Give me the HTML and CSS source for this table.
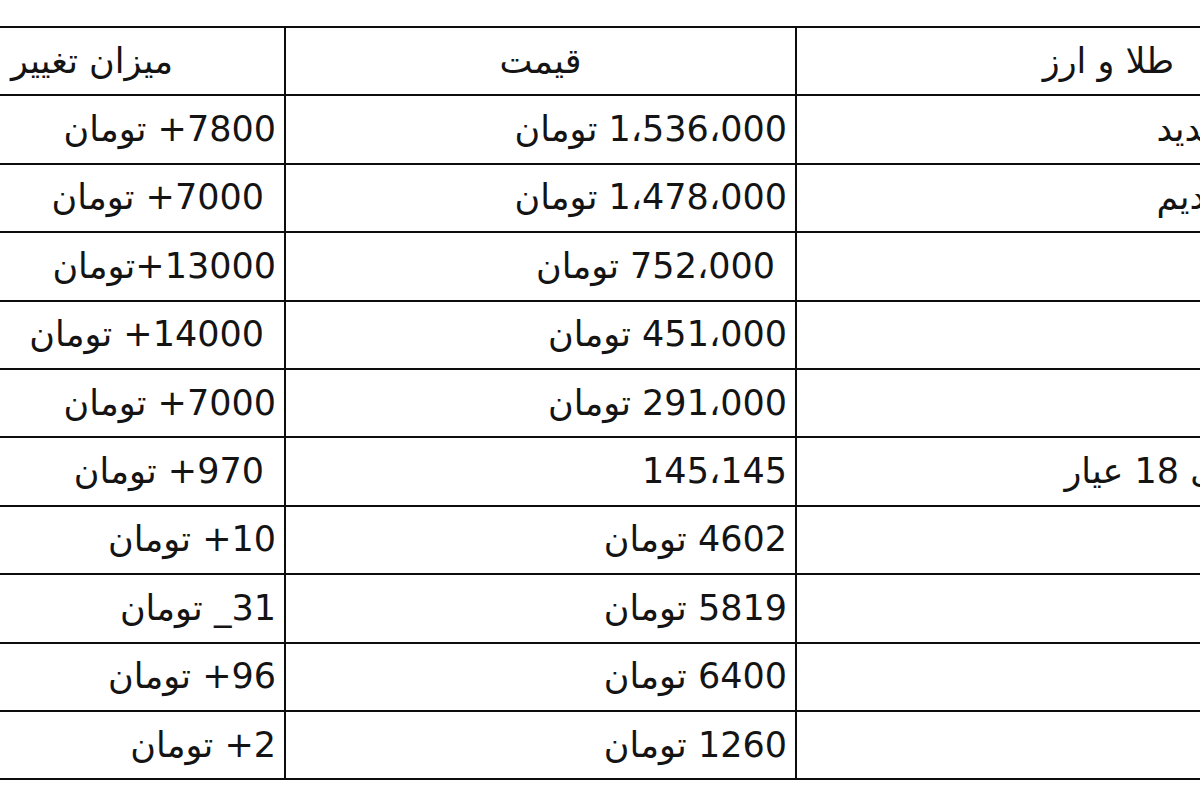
FILE: index.html
```html
<!DOCTYPE html>
<html lang="fa">
<head>
<meta charset="utf-8">
<title>قیمت طلا و ارز</title>
<link rel="stylesheet" href="styles.css">
</head>
<body>
<div class="page">
  <table class="rates" dir="rtl">
    <colgroup>
      <col class="c-name">
      <col class="c-price">
      <col class="c-change">
    </colgroup>
    <thead>
      <tr>
        <th>طلا و ارز</th>
        <th>قیمت</th>
        <th>میزان تغییر</th>
      </tr>
    </thead>
    <tbody>
      <tr><td class="name">سکه طرح جدید</td><td>1،536،000 تومان</td><td>7800+ تومان</td></tr>
      <tr><td class="name">سکه طرح قدیم</td><td>1،478،000 تومان</td><td><span class="pad">7000+ تومان</span></td></tr>
      <tr><td class="name">نیم سکه</td><td><span class="pad">752،000 تومان</span></td><td>13000+تومان</td></tr>
      <tr><td class="name">ربع سکه</td><td>451،000 تومان</td><td><span class="pad">14000+ تومان</span></td></tr>
      <tr><td class="name">سکه گرمی</td><td>291،000 تومان</td><td>7000+ تومان</td></tr>
      <tr><td class="name">هر گرم طلای 18 عیار</td><td>145،145</td><td><span class="pad">970+ تومان</span></td></tr>
      <tr><td class="name">دلار</td><td>4602 تومان</td><td>10+ تومان</td></tr>
      <tr><td class="name">یورو</td><td>5819 تومان</td><td>31_ تومان</td></tr>
      <tr><td class="name">پوند</td><td>6400 تومان</td><td>96+ تومان</td></tr>
      <tr><td class="name">درهم</td><td>1260 تومان</td><td>2+ تومان</td></tr>
    </tbody>
  </table>
</div>
</body>
</html>
```
FILE: styles.css
```css
html, body {
  margin: 0;
  padding: 0;
  background: #ffffff;
}
body {
  width: 1200px;
  height: 800px;
  overflow: hidden;
  font-family: "DejaVu Sans", "Liberation Sans", sans-serif;
  color: #141414;
}
.page {
  padding-top: 26px;
}
.rates {
  border-collapse: collapse;
  table-layout: fixed;
  width: 1522px;
  margin-right: -322px;
  margin-left: -102px;
  font-size: 35px;
  line-height: 1;
}
.c-name { width: 625px; }
.c-price { width: 511px; }
.c-change { width: 386px; }
.rates th,
.rates td {
  border: 2px solid #0d0d0d;
  height: 66.4px;
  padding: 0 8px;
  vertical-align: middle;
  white-space: nowrap;
  overflow: hidden;
}
.rates th {
  font-weight: normal;
  text-align: center;
}
.rates td {
  text-align: right;
}
.rates td.name {
  padding-right: 36px;
}
.pad {
  padding-right: 12px;
}
```
